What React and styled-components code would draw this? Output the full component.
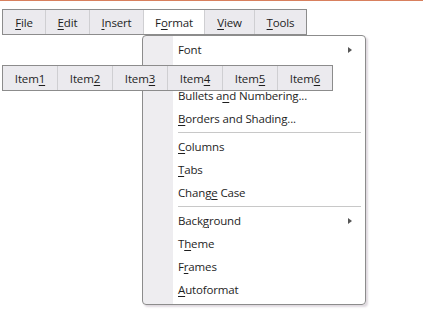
import React from "react";
import styled, { createGlobalStyle } from "styled-components";

const GlobalStyle = createGlobalStyle`
  body {
    margin: 0;
    background: #ffffff;
    font-family: "Open Sans", "Liberation Sans", sans-serif;
    font-size: 11.5px;
    letter-spacing: -0.15px;
    color: #1e1e1e;
  }
`;

const Page = styled.div`
  position: relative;
  width: 423px;
  height: 326px;
  border-top: 1px solid #d8805e;
  box-sizing: border-box;
  overflow: hidden;
`;

const MenuBar = styled.div`
  display: inline-flex;
  margin: 8px 0 0 2px;
  height: 26px;
  border: 1px solid #8c8c8c;
  box-sizing: border-box;
  background: #ebeaee;
`;

const BarItem = styled.div`
  width: ${(p) => p.$w}px;
  display: flex;
  align-items: center;
  justify-content: center;
  box-sizing: border-box;
  border-left: 1px solid #cfcfd2;
  background: ${(p) => (p.$active ? "#ffffff" : "transparent")};
  &:first-child {
    border-left: none;
  }
`;

const ToolBar = styled.div`
  position: absolute;
  left: 2px;
  top: 64px;
  z-index: 2;
  display: flex;
  height: 26px;
  border: 1px solid #8c8c8c;
  box-sizing: border-box;
  background: #ebeaee;
`;

const ToolItem = styled.div`
  width: 55px;
  display: flex;
  align-items: center;
  justify-content: center;
  box-sizing: border-box;
  border-left: 1px solid #cfcfd2;
  &:first-child {
    border-left: none;
    width: 54px;
  }
`;

const Dropdown = styled.div`
  position: absolute;
  left: 142px;
  top: 34px;
  z-index: 1;
  width: 224px;
  padding: 2px 0 3px;
  box-sizing: border-box;
  border: 1px solid #8c8c8c;
  border-radius: 4px;
  background: linear-gradient(to right, #eeedf0 30px, #ffffff 30px);
  box-shadow: 2px 2px 2px rgba(150, 130, 150, 0.3);
`;

const MenuRow = styled.div`
  height: 23px;
  display: flex;
  align-items: center;
  padding: 0 13px 0 35px;
  box-sizing: border-box;
`;

const Label = styled.span`
  flex: 1;
`;

const Arrow = styled.span`
  width: 0;
  height: 0;
  border-top: 3.5px solid transparent;
  border-bottom: 3.5px solid transparent;
  border-left: 4px solid #555555;
`;

const Separator = styled.div`
  height: 1px;
  margin: 2px 4px 2px 35px;
  background: #c8c8c8;
`;

const Key = styled.u`
  text-decoration-thickness: 1px;
  text-underline-offset: 2px;
`;

const menuBar = [
  { pre: "", key: "F", post: "ile", w: 42 },
  { pre: "", key: "E", post: "dit", w: 44 },
  { pre: "", key: "I", post: "nsert", w: 54 },
  { pre: "F", key: "o", post: "rmat", w: 61, active: true },
  { pre: "", key: "V", post: "iew", w: 50 },
  { pre: "", key: "T", post: "ools", w: 52 },
];

// the second row sits under the toolbar, so it is left blank
const groups = [
  [
    { pre: "Font", key: "", post: "", sub: true },
    { pre: "", key: "", post: "", id: "hidden" },
    { pre: "Bullets a", key: "n", post: "d Numbering..." },
    { pre: "", key: "B", post: "orders and Shading..." },
  ],
  [
    { pre: "", key: "C", post: "olumns" },
    { pre: "", key: "T", post: "abs" },
    { pre: "Chang", key: "e", post: " Case" },
  ],
  [
    { pre: "Back", key: "g", post: "round", sub: true },
    { pre: "T", key: "h", post: "eme" },
    { pre: "F", key: "r", post: "ames" },
    { pre: "", key: "A", post: "utoformat" },
  ],
];

const Text = ({ pre, k, post }) => (
  <>
    {pre}
    {k && <Key>{k}</Key>}
    {post}
  </>
);

export default function App() {
  return (
    <Page>
      <GlobalStyle />
      <MenuBar>
        {menuBar.map((m) => (
          <BarItem key={m.post} $w={m.w} $active={m.active}>
            <Text pre={m.pre} k={m.key} post={m.post} />
          </BarItem>
        ))}
      </MenuBar>

      <ToolBar>
        {[1, 2, 3, 4, 5, 6].map((n) => (
          <ToolItem key={n}>
            Item<Key>{n}</Key>
          </ToolItem>
        ))}
      </ToolBar>

      <Dropdown>
        {groups.map((g, gi) => (
          <React.Fragment key={gi}>
            {gi > 0 && <Separator />}
            {g.map((it) => (
              <MenuRow key={it.id || it.pre + it.post}>
                <Label>
                  <Text pre={it.pre} k={it.key} post={it.post} />
                </Label>
                {it.sub && <Arrow />}
              </MenuRow>
            ))}
          </React.Fragment>
        ))}
      </Dropdown>
    </Page>
  );
}
